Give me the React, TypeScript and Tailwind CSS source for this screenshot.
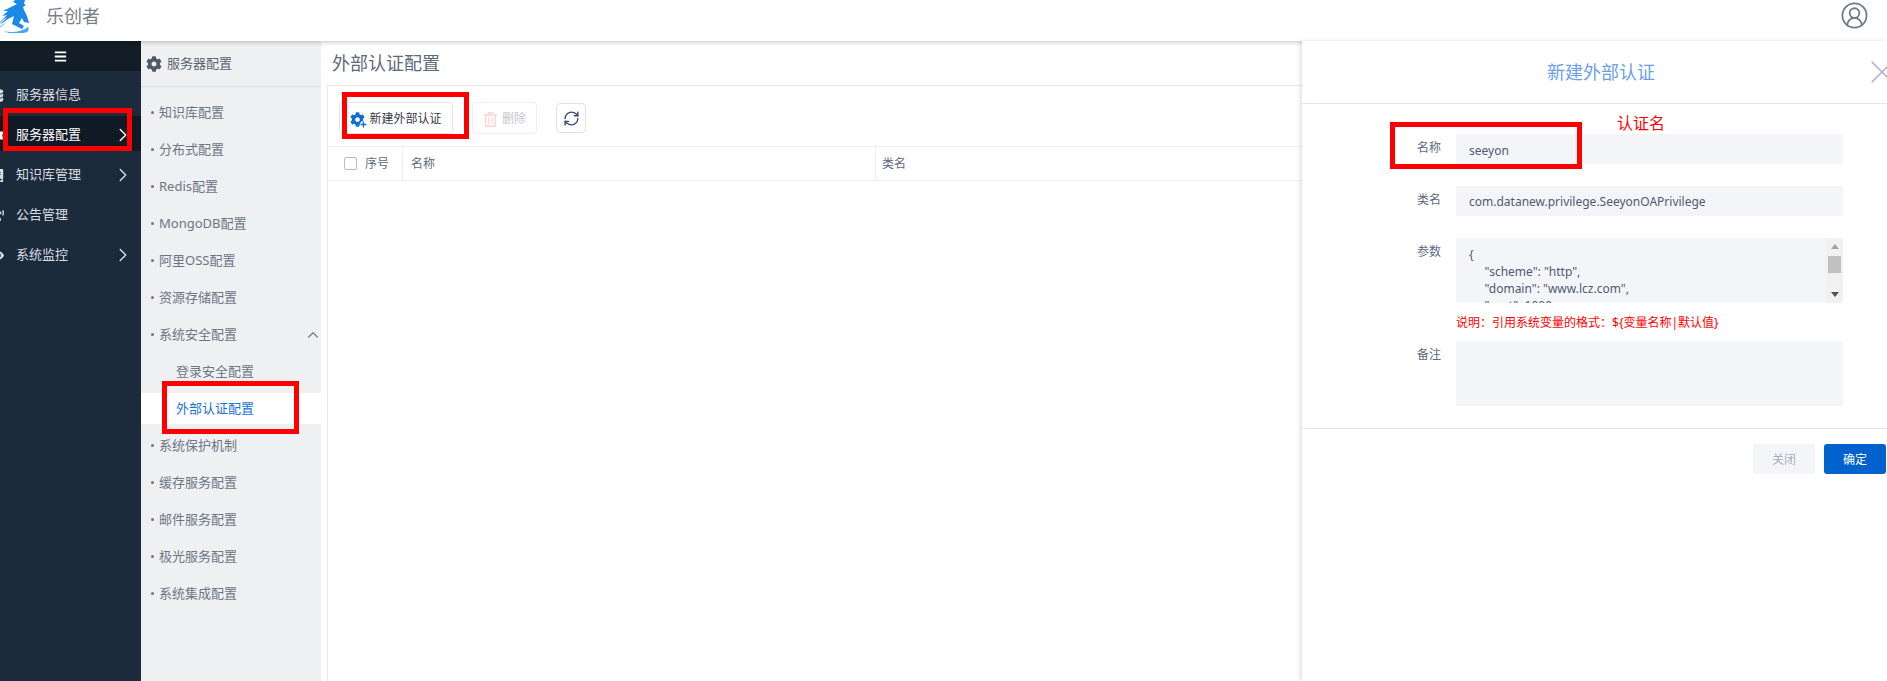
import React from 'react';
import { ChevronRight, ChevronUp, CircleUserRound, RefreshCw, X } from 'lucide-react';
import { FaBars, FaBook, FaBroadcastTower, FaCog, FaDatabase, FaEye, FaPlus, FaRegTrashAlt } from 'react-icons/fa';

const navItems = [
  { label: '服务器信息', icon: <FaDatabase />, arrow: false },
  { label: '服务器配置', icon: <FaCog />, arrow: true, active: true },
  { label: '知识库管理', icon: <FaBook />, arrow: true },
  { label: '公告管理', icon: <FaBroadcastTower />, arrow: false },
  { label: '系统监控', icon: <FaEye />, arrow: true },
];

const RedBox = ({ className }: { className: string }) => (
  <div className={`absolute border-[5px] border-[#ff0000] pointer-events-none z-30 ${className}`}></div>
);

const Logo = () => (
  <svg viewBox="0 0 30 34" className="w-[30px] h-[34px] shrink-0">
    <path d="M15 0h10l-1 4 2 1-3 2 1 3 3 6 2 7-5-1-2-4-3 5 5 3-2 3-10-5 2-8-6 3-7 5 2-5 4-4-5 1 6-5-5 0 8-4 6-3-4-2z" fill="#1a8ae6" />
    <path d="M3 31c9 2 19 1 25-4 2 3-1 6-5 6H9z" fill="#3fa9f0" />
    <path d="M0 21l7-4-2 3-5 4zM0 26l6-4-2 3-4 3z" fill="#9fd4f7" />
  </svg>
);

const SecondaryItem = ({ label, right }: { label: string; right?: React.ReactNode }) => (
  <div className="h-[37px] flex items-center pl-[10px] pr-[7px] text-[13px] text-[#6c7683]">
    <span className="w-[3px] h-[3px] rounded-full bg-[#6c7683] mr-[5px]"></span>
    <span className="flex-1">{label}</span>
    {right}
  </div>
);

const FormRow = ({ label, className, children }: { label: string; className?: string; children: React.ReactNode }) => (
  <div className={`flex ${className ?? ''}`}>
    <label className="w-[139px] text-right text-[12px] leading-[16px] pt-[6px] text-[#5d6a85] shrink-0">{label}</label>
    <div className="ml-[15px] w-[387px]">{children}</div>
  </div>
);

const App = () => {
  return (
    <div
      className="relative h-screen w-full flex flex-col overflow-hidden bg-white text-[#5d6a85]"
      style={{ fontFamily: '"Noto Sans", "Noto Sans CJK SC", sans-serif' }}
    >
      {/* Top bar */}
      <div className="relative z-10 h-[41px] shrink-0 flex items-center bg-white shadow-[0_1px_5px_rgba(0,0,0,0.25)]">
        <div className="self-start">
          <Logo />
        </div>
        <span className="ml-[16px] -mt-[9px] text-[18px] text-[#77808a]">乐创者</span>
        <CircleUserRound className="ml-auto mr-[18px] -mt-[11px] text-[#6f7b8a]" size={29} strokeWidth={1.5} />
      </div>

      <div className="flex-1 flex min-h-0">
        {/* Sidebar */}
        <div className="w-[141px] shrink-0 bg-[#1c2b3b] text-[#d9dde2]">
          <div className="h-[30px] bg-[#121d28] flex items-center justify-center pr-[21px] text-white text-[13px]">
            <FaBars />
          </div>
          {navItems.map((item) => (
            <div
              key={item.label}
              className={`mt-[5px] h-[35px] pt-[3px] flex items-center text-[13px] ${item.active ? 'bg-[#101a25] text-white' : ''}`}
            >
              <span className="w-[16px] -ml-[9px] mr-[9px] text-[13px] shrink-0">{item.icon}</span>
              <span className="flex-1">{item.label}</span>
              {item.arrow && <ChevronRight className="mr-[7px]" size={22} strokeWidth={1.5} />}
            </div>
          ))}
        </div>

        {/* Secondary menu */}
        <div className="w-[180px] shrink-0 bg-[#eff0f2]">
          <div className="h-[46px] flex items-center pl-[5px] border-b border-[#d9dae3] text-[13px] text-[#5a6470]">
            <FaCog className="text-[16px] mr-[5px] text-[#4f5a66]" />
            服务器配置
          </div>
          <div className="pt-[7px]">
            <SecondaryItem label="知识库配置" />
            <SecondaryItem label="分布式配置" />
            <SecondaryItem label="Redis配置" />
            <SecondaryItem label="MongoDB配置" />
            <SecondaryItem label="阿里OSS配置" />
            <SecondaryItem label="资源存储配置" />
            <SecondaryItem label="系统安全配置" right={<ChevronUp className="-mr-[8px]" size={18} strokeWidth={1.5} />} />
            <div className="h-[37px] flex items-center pl-[35px] text-[13px] text-[#6c7683]">登录安全配置</div>
            <div className="h-[31px] my-[3px] flex items-center pl-[35px] text-[13px] text-[#1a73d8] bg-white">外部认证配置</div>
            <SecondaryItem label="系统保护机制" />
            <SecondaryItem label="缓存服务配置" />
            <SecondaryItem label="邮件服务配置" />
            <SecondaryItem label="极光服务配置" />
            <SecondaryItem label="系统集成配置" />
          </div>
        </div>

        {/* Main content */}
        <div className="flex-1 min-w-0 flex flex-col pl-[6px]">
          <div className="h-[44px] shrink-0 flex items-center pl-[5px] text-[18px] text-[#5d6a7a]">外部认证配置</div>
          <div className="flex-1 border-l border-t border-[#e6e8f0]">
            <div className="h-[60px] flex items-center pl-[11px] pt-[4px]">
              <button className="h-[32px] w-[114px] pt-[2px] flex items-center justify-center gap-[4px] rounded-[4px] border border-[#e3e5ec] text-[12px] text-[#333c48]">
                <span className="relative text-[#0f6fd1] text-[15px]">
                  <FaCog />
                  <FaPlus className="absolute -right-[2px] -bottom-[1px] text-[7px] bg-white rounded-full" />
                </span>
                新建外部认证
              </button>
              <button className="ml-[19px] h-[32px] w-[65px] pt-[2px] flex items-center justify-center gap-[4px] rounded-[4px] border border-[#eeeff3] text-[12px] text-[#c4c7cc]">
                <FaRegTrashAlt className="text-[15px] text-[#fbd5d5]" />
                删除
              </button>
              <button className="ml-[19px] h-[30px] w-[30px] flex items-center justify-center rounded-[4px] border border-[#dfe1ea] text-[#3f4a78]">
                <RefreshCw size={17} strokeWidth={2} />
              </button>
            </div>
            <div className="flex h-[35px] border-y border-[#eceef4] text-[12px] text-[#5d6a85]">
              <div className="w-[75px] flex items-center pl-[16px] border-r border-[#eceef4]">
                <span className="w-[13px] h-[13px] rounded-[2px] border border-[#b6bccd] mr-[8px]"></span>
                序号
              </div>
              <div className="w-[473px] flex items-center pl-[8px] border-r border-[#eceef4]">名称</div>
              <div className="flex-1 flex items-center pl-[6px]">类名</div>
            </div>
          </div>
        </div>

        {/* Drawer */}
        <div className="relative z-20 w-[585px] shrink-0 bg-white shadow-[-2px_0_4px_rgba(0,0,0,0.12)] flex flex-col">
          <div className="relative h-[63px] shrink-0 flex items-center justify-center border-b border-[#e2e6f2] text-[18px] text-[#6a9fe8]">
            <span className="-mr-[13px]">新建外部认证</span>
            <X className="absolute -right-[15px] top-[11px] text-[#a9abd0]" size={40} strokeWidth={0.8} />
          </div>
          <div className="pt-[30px] border-b border-[#e2e6f2] h-[325px] shrink-0">
            <FormRow label="名称">
              <div className="h-[30px] pt-[3px] flex items-center pl-[13px] rounded-[2px] bg-[#f4f5f9] text-[12px] text-[#4f5b70]">seeyon</div>
            </FormRow>
            <FormRow label="类名" className="mt-[22px]">
              <div className="h-[30px] pt-[2px] flex items-center pl-[13px] rounded-[2px] bg-[#f4f5f9] text-[12px] text-[#4f5b70]">
                com.datanew.privilege.SeeyonOAPrivilege
              </div>
            </FormRow>
            <FormRow label="参数" className="mt-[22px]">
              <div className="h-[65px] flex rounded-[2px] bg-[#f4f5f9] overflow-hidden">
                <pre
                  className="flex-1 pl-[13px] pt-[8px] text-[12px] leading-[17px] text-[#4f5b70]"
                  style={{ fontFamily: 'inherit' }}
                >
                  {'{\n     "scheme": "http",\n     "domain": "www.lcz.com",\n     "port": 1000'}
                </pre>
                <div className="w-[17px] bg-[#f1f1f1] flex flex-col items-center justify-between py-[6px]">
                  <span className="w-0 h-0 border-x-[4px] border-x-transparent border-b-[5px] border-b-[#a3a3a3]"></span>
                  <span className="w-[13px] h-[17px] bg-[#c1c1c1] -mt-[12px]"></span>
                  <span className="w-0 h-0 border-x-[4px] border-x-transparent border-t-[5px] border-t-[#505050]"></span>
                </div>
              </div>
              <div className="mt-[12px] -mb-[1px] text-[12px] leading-[16px] text-[#ff0000] whitespace-nowrap">
                说明：引用系统变量的格式：${'{'}变量名称|默认值{'}'}
              </div>
            </FormRow>
            <FormRow label="备注" className="mt-[11px]">
              <div className="h-[65px] rounded-[2px] bg-[#f4f5f9]"></div>
            </FormRow>
          </div>
          <div className="flex justify-end gap-[9px] pt-[15px] pr-[1px]">
            <button className="w-[62px] h-[30px] pt-[2px] rounded-[3px] bg-[#f4f5f9] text-[12px] text-[#a9adb5]">关闭</button>
            <button className="w-[62px] h-[30px] pt-[2px] rounded-[3px] bg-[#0062cc] text-[12px] text-white">确定</button>
          </div>
        </div>
      </div>

      {/* Red annotations drawn over the screenshot */}
      <RedBox className="left-[3px] top-[108px] w-[129px] h-[43px]" />
      <RedBox className="left-[162px] top-[381px] w-[137px] h-[53px]" />
      <RedBox className="left-[342px] top-[92px] w-[127px] h-[47px]" />
      <RedBox className="left-[1390px] top-[122px] w-[192px] h-[47px]" />
      <span className="absolute left-[1617px] top-[111px] z-30 text-[16px] leading-[24px] text-[#ff0000]">认证名</span>
    </div>
  );
};

export default App;
